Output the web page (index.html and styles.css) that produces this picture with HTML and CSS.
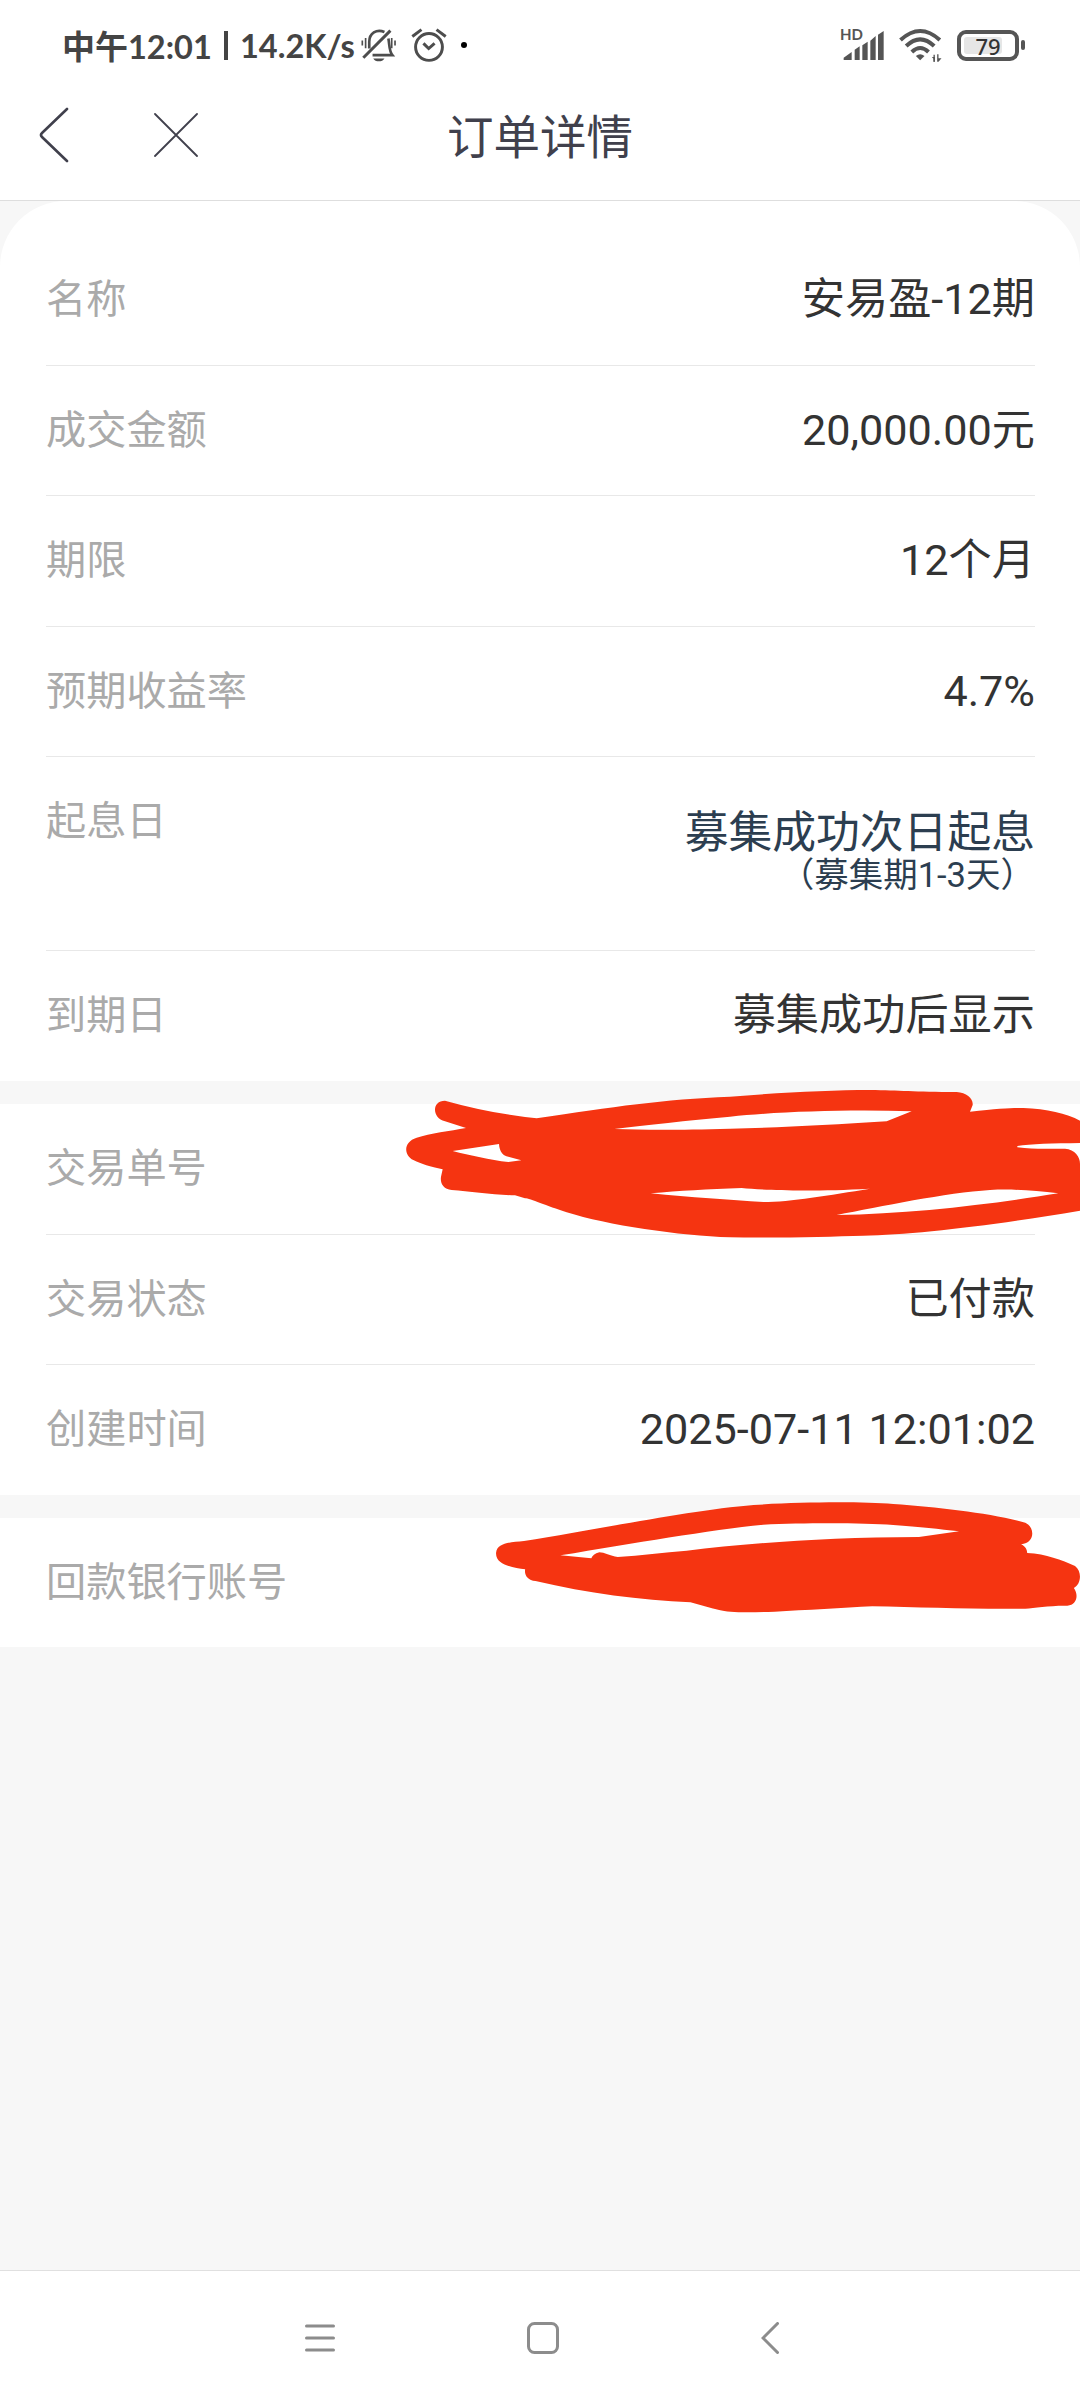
FILE: index.html
```
<!DOCTYPE html>
<html lang="zh-CN">
<head>
    <meta charset="UTF-8">
    <meta name="viewport" content="width=device-width, initial-scale=1.0">
    <title>订单详情</title>
    <link rel="stylesheet" href="styles.css">
</head>
<body>
    <div class="status-bar">
        <div class="status-left">
            <span class="time"><span class="noon">中午</span>12:01</span>
            <span class="bar"></span>
            <span class="speed">14.2K/s</span>
            <svg class="bell" viewBox="0 0 112 110">
                <g fill="none" stroke="#4d4d4d" stroke-width="8">
                    <path d="M10 92L92 10" stroke-width="9"/>
                    <path d="M74 14C50 4 28 18 28 44V64"/>
                    <path d="M86 34C90 58 88 72 98 84H38"/>
                    <path d="M7 40V55M17 32V63M96 32V63M106 40V55" stroke-width="5"/>
                </g>
                <path d="M40 94H74C68 106 46 106 40 94Z" fill="#4d4d4d"/>
            </svg>
            <svg class="alarm" viewBox="0 0 110 110">
                <g fill="none" stroke="#4d4d4d" stroke-width="9">
                    <circle cx="55" cy="61" r="41"/>
                    <path d="M4 29L32 8M106 29L78 8"/>
                    <path d="M38 50L54 66L72 50"/>
                </g>
            </svg>
            <span class="dot"></span>
        </div>
        <div class="status-right">
            <div class="signal">
                <span class="hd">HD</span>
                <svg viewBox="0 0 126 96">
                    <path d="M5 93V86L29 69V93ZM38 93V62L53 52V93ZM61 93V49L77 38V93ZM85 93V35L101 21V93ZM108 93V17L125 6V93Z" fill="#555"/>
                </svg>
            </div>
            <svg class="wifi" viewBox="0 0 128 102">
                <g fill="none" stroke="#555" stroke-width="12">
                    <path d="M4 36Q63 -18 122 36"/>
                    <path d="M21 54Q63 14 105 54"/>
                    <path d="M38 72Q63 48 88 72"/>
                </g>
                <path d="M50 84Q63 74 76 84L63 97Z" fill="#555"/>
                <path d="M98 87H107V101H103V92ZM114 79H118V91H127L118 101H114Z" fill="#555"/>
                <path d="M105 80V101" stroke="#555" stroke-width="4"/>
            </svg>
            <div class="battery"><span class="level"></span><span class="percent">79</span></div>
            <span class="battery-tip"></span>
        </div>
    </div>

    <div class="header">
        <svg class="back" viewBox="0 0 30 56">
            <path d="M28 2L3 26Q1 28 3 30L28 54"/>
        </svg>
        <svg class="close" viewBox="0 0 44 44">
            <path d="M1 1L43 43M43 1L1 43"/>
        </svg>
        <h1>订单详情</h1>
    </div>

    <div class="content">
        <div class="section first">
            <div class="row"><span class="label">名称</span><span class="value">安易盈-12期</span></div>
            <div class="row"><span class="label">成交金额</span><span class="value">20,000.00元</span></div>
            <div class="row"><span class="label">期限</span><span class="value">12个月</span></div>
            <div class="row"><span class="label">预期收益率</span><span class="value">4.7%</span></div>
            <div class="row tall">
                <span class="label">起息日</span>
                <div class="start-date">
                    <div class="main">募集成功次日起息</div>
                    <div class="sub">（募集期1-3天）</div>
                </div>
            </div>
            <div class="row"><span class="label">到期日</span><span class="value">募集成功后显示</span></div>
        </div>

        <div class="section">
            <div class="row"><span class="label">交易单号</span></div>
            <div class="row"><span class="label">交易状态</span><span class="value">已付款</span></div>
            <div class="row"><span class="label">创建时间</span><span class="value">2025-07-11 12:01:02</span></div>
            <svg class="scribble order-no" viewBox="0 0 2100 570">
                <path d="M195 92Q330 130 470 145C700 110 850 88 1050 80C1200 68 1350 60 1470 60C1560 61 1600 66 1730 66C1760 68 1780 85 1778 105L1770 125C1860 115 1900 113 1930 114C2000 117 2060 130 2100 152V219C2020 220 1950 222 1912 228V232C1960 238 2000 236 2055 236C2085 238 2100 260 2100 282V422C1850 465 1600 495 1450 497C1350 500 1200 504 1050 502C900 498 680 465 560 427C500 408 450 385 435 385L405 376C340 374 270 365 215 360C190 357 180 340 183 320L188 298C150 290 125 282 100 270C70 255 70 215 110 203C150 190 210 183 258 174L195 154C155 143 155 92 195 92Z
                    M218 243L357 222C358 245 370 258 385 260L424 271L385 276C330 270 270 256 218 243Z
                    M703 177C800 165 920 152 1050 140C1200 125 1400 118 1595 124L1520 154C1350 165 1200 173 1050 176C900 180 800 180 703 177Z
                    M812 370C900 362 980 358 1085 354C1150 360 1280 366 1470 356C1350 375 1230 396 1150 396C1050 390 930 382 812 370Z
                    M1370 435C1500 410 1700 368 1830 360C1900 356 1960 362 2035 370C1850 400 1600 432 1370 435Z"/>
            </svg>
        </div>

        <div class="section last">
            <div class="row"><span class="label">回款银行账号</span></div>
            <svg class="scribble bank-no" viewBox="0 0 1568 540" preserveAspectRatio="none">
                <path d="M115 183C300 150 550 90 715 75C850 65 1000 65 1080 72C1200 82 1340 100 1425 128C1450 140 1452 190 1414 193C1425 198 1430 210 1430 219C1480 222 1520 240 1555 258C1575 275 1570 315 1552 324C1565 345 1560 375 1535 377C1490 376 1450 384 1425 386C1300 388 1150 382 1025 379C950 383 850 391 770 395C700 398 650 398 625 390C600 385 575 374 550 367C420 360 280 340 145 303C125 302 115 285 118 268C85 262 40 255 42 218C45 190 75 187 115 183Z
                    M210 226C400 190 600 150 740 134C850 128 1000 128 1080 135C1150 141 1200 147 1252 154L1147 171C900 172 700 190 540 212C480 218 420 226 360 231C340 228 325 217 312 217C300 220 293 228 291 235Z"/>
            </svg>
        </div>
    </div>

    <div class="nav-bar">
        <svg class="nav-menu" viewBox="0 0 30 32">
            <path d="M1.5 4H28.5M1.5 16H28.5M1.5 28H28.5"/>
        </svg>
        <svg class="nav-home" viewBox="0 0 32 32">
            <rect x="1.5" y="1.5" width="29" height="29" rx="6"/>
        </svg>
        <svg class="nav-back" viewBox="0 0 18 32">
            <path d="M16.5 1.5L2 16L16.5 30.5"/>
        </svg>
    </div>
</body>
</html>
```
FILE: styles.css
```
* {
    box-sizing: border-box;
}
body {
    margin: 0;
    height: 2400px;
    display: flex;
    flex-direction: column;
    overflow: hidden;
    background-color: #f7f7f7;
    font-family: Roboto, "Noto Sans CJK SC", sans-serif;
}
svg {
    display: block;
    flex: none;
}
.status-bar {
    display: flex;
    justify-content: space-between;
    height: 88px;
    padding: 0 55px 0 62px;
    background-color: #fff;
}
.status-left,
.status-right {
    display: flex;
    align-items: center;
    height: 90px;
}
.status-left {
    color: #444;
    font-family: Lato, "Noto Sans CJK SC", sans-serif;
    font-size: 32.5px;
    font-weight: bold;
    white-space: nowrap;
}
.time {
    width: 151px;
}
.noon {
    font-size: 33px;
}
.bar {
    width: 4px;
    height: 29px;
    margin-left: 11px;
    background-color: #444;
}
.speed {
    width: 114px;
    margin-left: 12px;
}
.bell {
    width: 37px;
    height: 37px;
    margin-left: 6px;
}
.alarm {
    width: 36px;
    height: 36px;
    margin-left: 14px;
}
.dot {
    width: 6px;
    height: 6px;
    margin-left: 14px;
    border-radius: 50%;
    background-color: #000;
}
.signal {
    position: relative;
    width: 42px;
    height: 32px;
    margin-right: 15px;
}
.hd {
    position: absolute;
    left: -2px;
    top: -3px;
    color: #555;
    font: bold 15px/17px Lato, sans-serif;
}
.wifi {
    width: 43px;
    height: 34px;
    margin-right: 15px;
}
.battery {
    position: relative;
    width: 62px;
    height: 31px;
    border: 4px solid #555;
    border-radius: 9px;
    text-align: center;
}
.level {
    position: absolute;
    left: 3px;
    top: 3px;
    width: 38px;
    height: 17px;
    border-radius: 3px;
    background-color: #e6e6e6;
}
.percent {
    position: relative;
    display: block;
    color: #333;
    font: 500 22px/24px "Noto Sans", sans-serif;
}
.battery-tip {
    width: 4px;
    height: 10px;
    margin-left: 2px;
    border-radius: 2px;
    background-color: #555;
}
.header {
    position: relative;
    display: flex;
    align-items: center;
    height: 113px;
    padding: 0 0 19px 39px;
    border-bottom: 1px solid #dedede;
    background-color: #fff;
}
.header svg {
    fill: none;
    stroke: #40404c;
    stroke-linecap: round;
}
.back {
    width: 30px;
    height: 56px;
    stroke-width: 2.6;
}
.close {
    width: 44px;
    height: 44px;
    margin-left: 85px;
    stroke-width: 1.8;
}
.header h1 {
    position: absolute;
    left: 0;
    right: 0;
    top: 15px;
    margin: 0;
    color: #40404c;
    font-size: 46.5px;
    font-weight: normal;
    line-height: 70px;
    text-align: center;
}
.content {
    flex: 1;
}
.section {
    position: relative;
    height: 391px;
    margin-bottom: 23px;
    padding: 0 45px 0 46px;
    background-color: #fff;
}
.section.first {
    height: 880px;
    padding-top: 34px;
    border-radius: 66px 66px 0 0;
}
.section.last {
    height: 129px;
}
.row {
    display: flex;
    justify-content: space-between;
    height: 130.6px;
    padding-top: 35px;
    border-bottom: 1px solid #e8e8e8;
    line-height: 60px;
}
.row:last-of-type {
    border-bottom: none;
}
.row.tall {
    height: 194px;
}
.label {
    color: #aaa;
    font-size: 40.2px;
}
.value {
    color: #333;
    font-size: 43.2px;
}
.start-date {
    color: #2c3e50;
    text-align: right;
}
.start-date .main {
    padding-top: 11px;
    font-size: 43.8px;
    line-height: 60px;
}
.start-date .sub {
    font-size: 34.5px;
    line-height: 40px;
    margin-top: -8px;
}
.scribble {
    position: absolute;
    z-index: 1;
    fill: #f53411;
    fill-rule: evenodd;
}
.order-no {
    left: 380px;
    top: -34px;
    width: 700px;
    height: 190px;
}
.bank-no {
    left: 480px;
    top: -38px;
    width: 600px;
    height: 180px;
}
.nav-bar {
    display: flex;
    height: 130px;
    padding: 51px 0 0 305px;
    border-top: 1px solid #e0e0e0;
    background-color: #fff;
}
.nav-bar svg {
    height: 32px;
    fill: none;
    stroke: #8c8c8c;
    stroke-width: 3;
    stroke-linecap: round;
}
.nav-menu {
    width: 30px;
}
.nav-home {
    width: 32px;
    margin-left: 192px;
}
.nav-back {
    width: 18px;
    margin-left: 202px;
}
```
